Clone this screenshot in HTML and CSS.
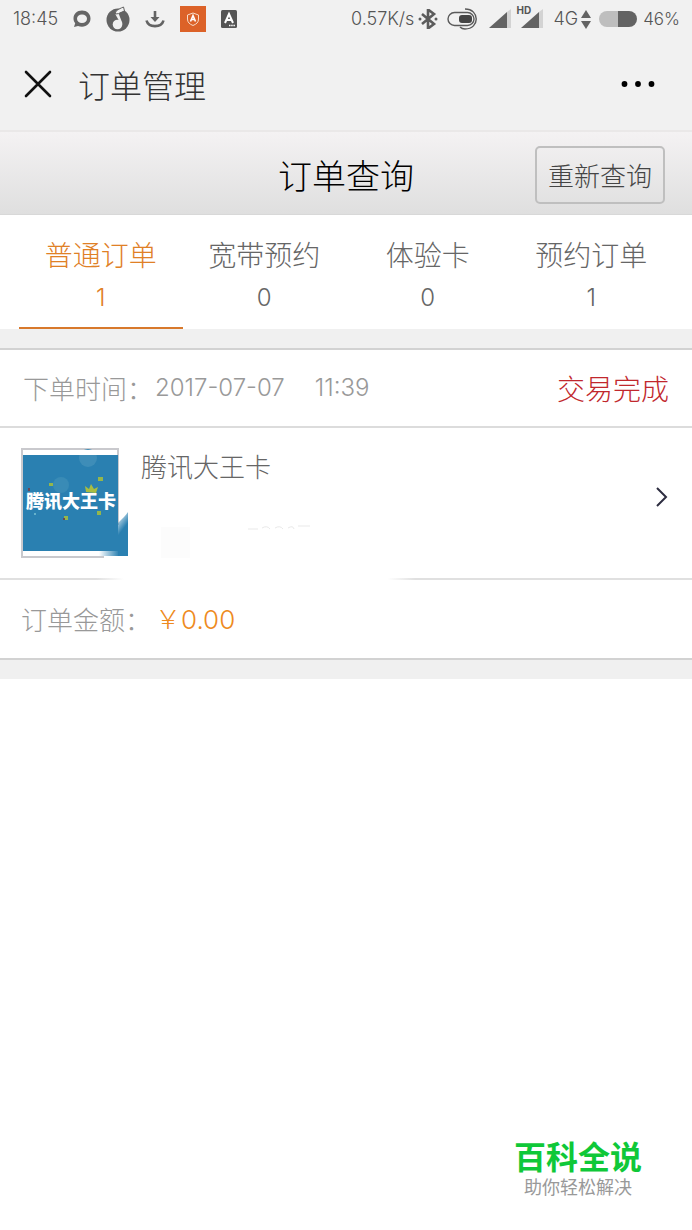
FILE: index.html
```html
<!DOCTYPE html>
<html lang="zh-CN">
<head>
<meta charset="utf-8">
<meta name="viewport" content="width=device-width, initial-scale=1">
<title>订单管理</title>
<link rel="stylesheet" href="styles.css">
</head>
<body>
<div class="status">
  <div class="status-left">
    <span>18:45</span>
    <svg width="18" height="18" viewBox="0 0 18 18" aria-hidden="true"><path d="M9 .5C4 .5 .5 4 .5 8.500c0 2 .8 3.500 1.700 4.700L1 17l4-1c1.200.5 2.600.7 4 .7 5 0 8.500-3.700 8.500-8.200S14 .5 9 .5zm0 4c3 0 5 1.700 5 4.200S12 13 9 13 4 11.200 4 8.700 6 4.500 9 4.500z" fill="#666" fill-rule="evenodd"/></svg>
    <svg width="24" height="26" viewBox="0 0 24 26" aria-hidden="true"><circle cx="12" cy="14" r="11.500" fill="#636363"/><path d="M14 16.500 9.500 8.500c-1-3 1-4.500 8-7l.5 3.500c-4 1.500-5.500 2-5 3.500l3.500 9z" fill="#f1f1f1"/><path d="M9.500 8c-.5-3 2-4.500 8-7l1 4-6 2.600z" fill="none" stroke="#636363" stroke-width="1"/><circle cx="11.500" cy="18.500" r="4.800" fill="#f1f1f1"/></svg>
    <svg width="20" height="18" viewBox="0 0 20 18" fill="none" stroke="#636363" stroke-width="2.600" aria-hidden="true"><path d="M10 1v9M1.500 10.500c2 7.500 15 7.500 17 0"/><path d="M5.500 7h9L10 12z" fill="#636363" stroke="none"/></svg>
    <svg width="26" height="26" viewBox="0 0 26 26" aria-hidden="true"><path d="M0 0h26v26H0z" fill="#dc6228"/><path d="m13 7 5.500 2v4c0 3.500-2 5-5.500 6.500C9.500 18 7.500 16.500 7.500 13V9z" fill="none" stroke="#f8dcc8"/><path d="m10.500 15.500 2.500-6 2.500 6m-4-2h3" fill="none" stroke="#fff" stroke-width="1.600"/></svg>
    <svg width="16" height="18" viewBox="0 0 16 18" aria-hidden="true"><rect width="16" height="18" rx="1.500" fill="#555"/><path d="M4 13 8 4l4 9m-7-3h6" fill="none" stroke="#fff" stroke-width="2"/><path d="M8 15.500h6" stroke="#fff" stroke-width="1.500" stroke-dasharray="1.500 .7"/></svg>
  </div>
  <div class="status-right">
    <span>0.57K/s</span>
    <svg class="bt" width="20" height="20" viewBox="0 0 20 20" aria-hidden="true"><path d="M4 5l12 10-6 4.500V.5L16 5 4 15" fill="none" stroke="#5c5c5c" stroke-width="2.600"/><circle cx="2" cy="10" r="1.500" fill="#5c5c5c"/><circle cx="18" cy="10" r="1.500" fill="#5c5c5c"/></svg>
    <svg class="vib" width="31" height="22" viewBox="0 0 31 22" fill="none" stroke="#5a5a5a" stroke-width="1.400" aria-hidden="true"><rect x="1" y="4.500" width="26" height="13" rx="6.500"/><rect x="12" y="7" width="13" height="8" rx="3" fill="#444" stroke="none"/><path d="M18 1c15 0 15 20 0 20-3 0-4-1-5-2"/></svg>
    <svg class="sig" width="22" height="20" viewBox="0 0 22 20" aria-hidden="true"><path d="M18 3l4-3v19h-4z" fill="#d3d3d3"/><path d="M0 19 18 3v16z" fill="#636363"/></svg>
    <span class="sig sig-hd"><b class="hd">HD</b><svg width="22" height="20" viewBox="0 0 22 20" aria-hidden="true"><path d="M18 3l4-3v19h-4z" fill="#d3d3d3"/><path d="M0 19 18 3v16z" fill="#636363"/></svg></span>
    <span>4G</span>
    <svg class="updown" width="10" height="19" viewBox="0 0 10 19" aria-hidden="true"><path d="M5 0l5 8H0zM5 19l5-8H0z" fill="#636363"/></svg>
    <span class="battery"></span>
    <span class="pct">46%</span>
  </div>
</div>
<header class="nav">
  <button class="icon-btn" aria-label="关闭"><svg width="28" height="28" viewBox="0 0 28 28"><path d="M2 2l24 24M26 2 2 26" stroke="#111" stroke-width="2.600" stroke-linecap="round"/></svg></button>
  <h1 class="nav-title">订单管理</h1>
  <button class="icon-btn more" aria-label="更多"><svg width="34" height="8" viewBox="0 0 34 8"><circle cx="3.500" cy="4" r="2.900"/><circle cx="17" cy="4" r="2.900"/><circle cx="30.500" cy="4" r="2.900"/></svg></button>
</header>
<div class="head">
  <h2 class="head-title">订单查询</h2>
  <button class="requery">重新查询</button>
</div>
<nav class="tabs">
  <button class="tab active"><span>普通订单</span><span class="count">1</span></button>
  <button class="tab"><span>宽带预约</span><span class="count">0</span></button>
  <button class="tab"><span>体验卡</span><span class="count">0</span></button>
  <button class="tab"><span>预约订单</span><span class="count">1</span></button>
</nav>
<main class="order">
  <div class="row time">
    <span>下单时间：</span><span class="date">2017-07-07</span><span class="date clock">11:39</span>
    <strong class="state">交易完成</strong>
  </div>
  <a class="item" href="#">
    <svg class="thumb" width="110" height="112" viewBox="0 0 110 112" role="img" aria-label="腾讯大王卡">
      <defs>
        <linearGradient id="down" x1="0" y1="0" x2=".3" y2="1"><stop offset="0" stop-color="#2a80b1" stop-opacity="0"/><stop offset=".5" stop-color="#2a80b1"/></linearGradient>
        <linearGradient id="across" x1="0" y1="0" x2="1" y2="0"><stop offset="0" stop-color="#2a80b1" stop-opacity="0"/><stop offset="1" stop-color="#2a80b1"/></linearGradient>
      </defs>
      <path d="M97 78V2H1v108h82" fill="#fff" stroke="#c9c9cd" stroke-width="2"/>
      <path d="M2 8h95v96H2z" fill="#2a80b1"/>
      <circle cx="67" cy="11" r="9" fill="#3e8db8"/><circle cx="40" cy="38" r="8" fill="#398bb6"/>
      <path d="M58 3h20v5H58z" fill="#fff"/>
      <path d="M97 76c4-4 8-8 10-11v44H97z" fill="url(#down)"/>
      <path d="M78 104h20v5H78z" fill="url(#across)"/><path d="M97 90h10v19H97z" fill="#2a80b1"/>
      <path d="m65 45-1-6 4 3 2-5 3 5 4-2-2 6z" fill="#a8bd41"/>
      <text x="5" y="61" class="thumb-text">腾讯大王卡</text>
      <path d="M28 36h4v3h-4zM77 30h5v4h-5zM76 64h4v4h-4zM43 69h4v4h-4z" fill="#94b64c"/>
      <path d="M7 41h2v3H7zM42 71h2v2h-2z" fill="#6b4757"/><circle cx="14" cy="67" r="1" fill="#7bc3d4"/>
    </svg>
    <span class="desc">
      <span>腾讯大王卡</span>
      <svg width="170" height="36" viewBox="0 0 170 36" aria-hidden="true"><path d="M20 4h29v31H20z" fill="#fcfcfc"/><path d="M107 6h10m4-1q5-3 8 1m5-1q5-3 8 1m5-1q5-3 6 1m4-3h12" fill="none" stroke="#e9e9e9"/></svg>
    </span>
    <svg class="chev" width="14" height="22" viewBox="0 0 14 22" aria-hidden="true"><path d="m2 2 9 9-9 9" fill="none" stroke="#2d2d40" stroke-width="2"/></svg>
  </a>
  <div class="row amount"><span>订单金额：</span><span class="price">￥<span class="sum">0.00</span></span></div>
</main>
<footer class="brand"><strong>百科全说</strong><span>助你轻松解决</span></footer>
</body>
</html>
```
FILE: styles.css
```css
* { box-sizing: border-box; }
body {
  margin: 0;
  min-height: 100vh;
  display: flex;
  flex-direction: column;
  background: #fff;
  color: #666;
  font-family: "Noto Sans CJK SC", sans-serif;
  font-weight: 300;
  font-size: 26px;
  line-height: 38px;
}
svg { display: block; flex: none; }
button { font: inherit; color: inherit; background: none; border: 0; padding: 0; }
h1, h2 { margin: 0; font-weight: 300; }

.status {
  display: flex;
  justify-content: space-between;
  height: 38px;
  padding: 0 12px 0 13px;
  background: #f1f1f1;
  color: #555;
  font-family: Inter, "Liberation Sans", sans-serif;
  font-size: 18px;
  line-height: 38px;
}
.status-left, .status-right { display: flex; align-items: center; }
.status-left { gap: 15px; }
.bt { margin: 0 9px 0 4px; }
.vib { margin-right: 11px; }
.sig { margin-right: 10px; }
.sig-hd { position: relative; }
.hd { position: absolute; left: -5px; top: -4px; font-size: 10px; line-height: 10px; font-weight: 700; }
.updown { margin: 0 8px 0 3px; }
.battery {
  width: 38px;
  height: 16px;
  margin-right: 6px;
  border-radius: 8px;
  background: linear-gradient(90deg, #bebebe 50%, #636363 50%);
}
.pct { font-size: 17px; }

.nav {
  display: flex;
  align-items: center;
  height: 94px;
  padding: 0 37px 0 24px;
  background: #f1f1f1;
  border-bottom: 2px solid #eae8e8;
}
.nav-title { margin-left: 26px; font-size: 32px; color: #333; }
.more { margin-left: auto; }

.head {
  display: grid;
  grid-template-columns: 1fr auto 1fr;
  align-items: center;
  height: 83px;
  padding: 4px 27px 0;
  background: linear-gradient(#f4f2f3, #dfdfdf);
  border-bottom: 1px solid #d8d8d8;
}
.head-title { grid-column: 2; font-size: 34px; color: #000; }
.requery {
  justify-self: end;
  padding: 8px 11px;
  border: 2px solid #bfbfbf;
  border-radius: 5px;
  color: #444;
}

.tabs {
  display: grid;
  grid-template-columns: repeat(4, 1fr);
  height: 114px;
  padding: 0 19px;
}
.tab {
  display: flex;
  flex-direction: column;
  align-items: center;
  padding-top: 20px;
  gap: 6px;
  font-size: 28px;
}
.count, .date, .sum { font-family: Inter, "Liberation Sans", sans-serif; }
.count { font-size: 24px; }
.active { color: #e08026; border-bottom: 2px solid #d8792c; }

.order {
  border: solid #f0f0f0;
  border-width: 19px 0;
}
.row {
  display: flex;
  align-items: center;
  height: 80px;
  padding: 0 23px;
  border-bottom: 2px solid #dcdcdc;
  color: #999;
}
.time { border-top: 2px solid #d2d2d2; }
.date { margin-left: 2px; font-size: 24px; }
.clock { margin-left: 30px; }
.state { margin-left: auto; font-size: 28px; font-weight: 300; color: #c1272d; }
.item {
  display: flex;
  align-items: center;
  padding: 19px 23px 19px 21px;
  color: #666;
  text-decoration: none;
  border-bottom: 2px solid;
  border-image: linear-gradient(90deg, #e0e0e0 14%, #fff 18%, #fff 56%, #e0e0e0 60%) 1;
}
.thumb-text { font-size: 18px; font-weight: 900; fill: #fff; }
.desc { align-self: stretch; display: flex; flex-direction: column; justify-content: space-between; margin-left: 10px; }
.chev { margin: 0 0 12px auto; }
.amount { padding-left: 21px; border-color: #d2d2d2; }
.price { margin-left: 4px; color: #ee8a20; }
.sum { font-size: 26px; }

.brand {
  display: flex;
  flex-direction: column;
  align-items: center;
  align-self: flex-end;
  margin: auto 50px 30px 0;
  color: #999;
  font-size: 18px;
  font-weight: 400;
  line-height: 28px;
}
.brand strong { color: #0fc838; font-size: 32px; font-weight: 700; line-height: 34px; }
```
